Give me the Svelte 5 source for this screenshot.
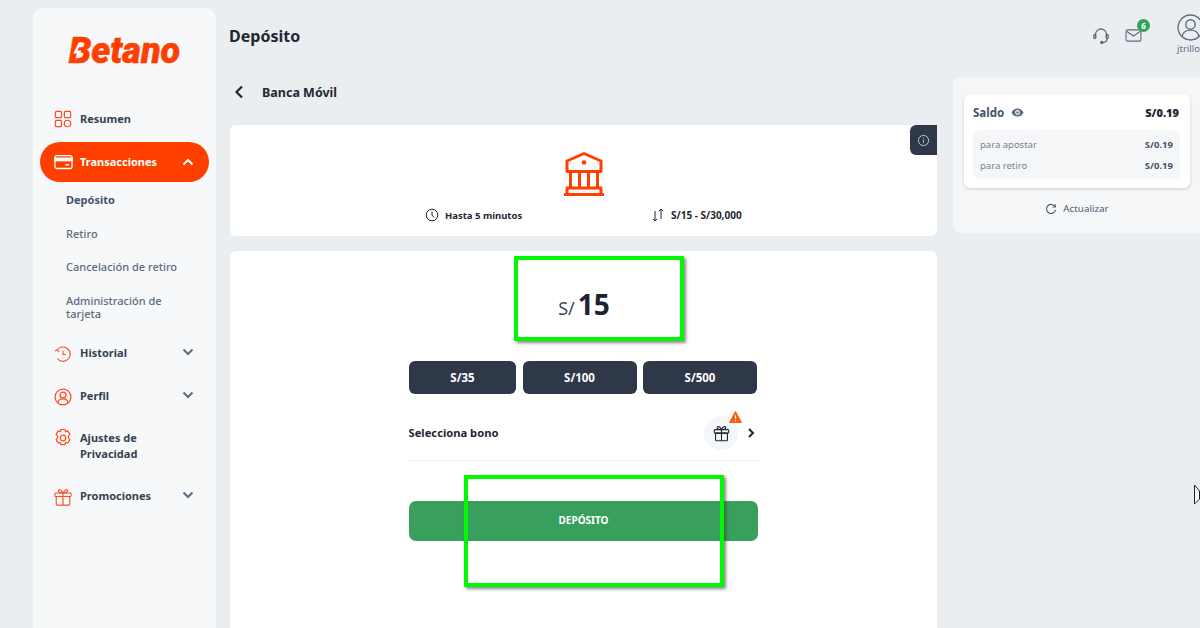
<script>
  const chips = ["S/35", "S/100", "S/500"];
  const subItems = ["Depósito", "Retiro", "Cancelación de retiro", "Administración de tarjeta"];
</script>

<div class="page">
  <aside class="sidebar">
    <div class="logo">
      <span class="wordmark">Betano
        <svg class="bolt" viewBox="0 0 14 24"><path d="M8 1 1.500 14H7L4 23l8-13H7l4-9z" fill="#f7f8fa" /></svg>
      </span>
    </div>
    <nav>
      <a class="item resumen">
        <svg class="ico" viewBox="0 0 20 20" fill="none" stroke="#fe4a1c" stroke-width="1.300">
          <rect x="1.500" y="1.500" width="7" height="7" rx="1.500" />
          <rect x="11.500" y="1.500" width="7" height="7" rx="1.500" />
          <rect x="1.500" y="11.500" width="7" height="7" rx="1.500" />
          <circle cx="15" cy="15" r="3.600" />
        </svg>
        <span>Resumen</span>
      </a>
      <a class="item active">
        <svg class="ico wide" viewBox="0 0 20 16" fill="none" stroke="#fff" stroke-width="1.400">
          <rect x="1" y="1.200" width="18" height="13.600" rx="2" />
          <rect x="1" y="4" width="18" height="2.600" fill="#fff" />
          <path d="M12 11h4" />
        </svg>
        <span>Transacciones</span>
        <svg class="chev up" viewBox="0 0 12 8" fill="none" stroke="#fff" stroke-width="2"><path d="M1.500 6.500 6 2l4.500 4.500" /></svg>
      </a>
      <ul class="sub">
        {#each subItems as label, i}
          <li class:current={i === 0}>{label}</li>
        {/each}
      </ul>
      <a class="item historial">
        <svg class="ico" viewBox="0 0 20 20" fill="none" stroke="#fe4a1c" stroke-width="1.200">
          <path d="M3.500 5.500A8 8 0 1 1 3.600 15" />
          <path d="M1 6.800 3.700 5.300 5.800 7.800M10 6.500v4h3" />
        </svg>
        <span>Historial</span>
        <svg class="chev" viewBox="0 0 12 8" fill="none" stroke="#5d6b80" stroke-width="2"><path d="M1.500 1.500 6 6l4.500-4.500" /></svg>
      </a>
      <a class="item perfil">
        <svg class="ico" viewBox="0 0 20 20" fill="none" stroke="#fe4a1c" stroke-width="1.400">
          <circle cx="10" cy="10" r="8.800" />
          <circle cx="10" cy="7.800" r="3.300" />
          <path d="M4.500 16.500c0-6 11-6 11 0" />
        </svg>
        <span>Perfil</span>
        <svg class="chev" viewBox="0 0 12 8" fill="none" stroke="#5d6b80" stroke-width="2"><path d="M1.500 1.500 6 6l4.500-4.500" /></svg>
      </a>
      <a class="item ajustes">
        <svg class="ico" viewBox="0 0 20 20" fill="none" stroke="#fe4a1c" stroke-width="1.200">
          <path d="M8 1.500h4l.6 2.300 2-.9 2.300 3.300-1.500 1.900.1 1.900 1.400 1.900-2.300 3.300-2-.9-.6 2.300H8l-.6-2.300-2 .9-2.300-3.300 1.400-1.900.1-1.900-1.500-1.900 2.300-3.300 2 .9z" stroke-linejoin="round" />
          <circle cx="10" cy="10" r="2.800" />
        </svg>
        <span>Ajustes de<br />Privacidad</span>
      </a>
      <a class="item promos">
        <svg class="ico" viewBox="0 0 20 20" fill="none" stroke="#fe4a1c" stroke-width="1.200">
          <rect x="1" y="5.500" width="18" height="4" rx="1" />
          <rect x="2.500" y="9.500" width="15" height="9.500" rx="1" />
          <path d="M10 5.500V19M10 5.500C8 1 4.500 1 5 3.500c.3 1.500 3 2 5 2zM10 5.500c2-4.500 5.500-4.500 5-2-.3 1.500-3 2-5 2z" />
        </svg>
        <span>Promociones</span>
        <svg class="chev" viewBox="0 0 12 8" fill="none" stroke="#5d6b80" stroke-width="2"><path d="M1.500 1.500 6 6l4.500-4.500" /></svg>
      </a>
    </nav>
  </aside>

  <main class="content">
    <h1>Depósito</h1>
    <div class="back">
      <svg viewBox="0 0 10 14" fill="none" stroke="#1f2733" stroke-width="2.200"><path d="M8 1.500 2.500 7 8 12.500" /></svg>
      <span>Banca Móvil</span>
    </div>

    <section class="card method">
      <div class="info-tab">
        <svg viewBox="0 0 14 14" fill="none" stroke="#c9ced6" stroke-width="1"><circle cx="7" cy="7" r="5.500" /><path d="M7 6.300v3.200M7 4.200v1" /></svg>
      </div>
      <svg class="bank" viewBox="0 0 42 44" fill="none" stroke="#fe3f00" stroke-width="3" stroke-linejoin="round">
        <path d="M21 1.500 38 9v10.500H4V9z" />
        <circle cx="21" cy="10.500" r="2.300" fill="#fe3f00" stroke="none" />
        <path d="M7.500 19.500V36M16.500 19.500V36M25.500 19.500V36M34.500 19.500V36" />
        <path d="M4 36h34v6.500H4zM1 42.500h40" />
      </svg>
      <div class="facts">
        <div class="fact">
          <svg viewBox="0 0 14 14" fill="none" stroke="#1f2733" stroke-width="1"><circle cx="7" cy="7" r="5.800" /><path d="M7 3.500V7l2 2.500" /></svg>
          <span>Hasta 5 minutos</span>
        </div>
        <div class="fact limits">
          <svg viewBox="0 0 14 14" fill="none" stroke="#1f2733" stroke-width="1"><path d="M4 3v10M1.800 10.800 4 13l2.200-2.200M10 11V1M7.800 3.200 10 1l2.200 2.200" /></svg>
          <span>S/15 - S/30,000</span>
        </div>
      </div>
    </section>

    <section class="card form">
      <div class="amount"><small>S/</small><strong>15</strong></div>
      <div class="chips">
        {#each chips as chip}
          <button>{chip}</button>
        {/each}
      </div>
      <div class="bonus">
        <span>Selecciona bono</span>
        <div class="gift">
          <svg viewBox="0 0 20 20" fill="none" stroke="#1f2733" stroke-width="1.300">
            <rect x="1.500" y="5.500" width="17" height="4" rx="1" />
            <rect x="3" y="9.500" width="14" height="9" rx="1" />
            <path d="M10 5.500v13M10 5.500C8 1 4.500 1 5 3.500c.3 1.500 3 2 5 2zM10 5.500c2-4.500 5.500-4.500 5-2-.3 1.500-3 2-5 2z" />
          </svg>
          <svg class="warn" viewBox="0 0 14 13">
            <path d="M7 .5 13.500 12.500H.5z" fill="#ff5a0a" stroke="#ff5a0a" stroke-linejoin="round" />
            <path d="M7 4.500v4M7 9.800v1.200" stroke="#fff" stroke-width="1.300" />
          </svg>
        </div>
        <svg class="next" viewBox="0 0 8 12" fill="none" stroke="#1f2733" stroke-width="2"><path d="M2 2l4 4-4 4" /></svg>
      </div>
      <button class="submit">DEPÓSITO</button>
    </section>
  </main>

  <aside class="balance">
    <div class="saldo">
      <div class="saldo-head">
        <span class="lbl">Saldo</span>
        <svg viewBox="0 0 14 10" fill="#5d6b80"><path d="M7 .5C3.800.5 1.300 2.400.3 5c1 2.600 3.500 4.500 6.700 4.500s5.700-1.900 6.700-4.500C12.700 2.400 10.200.5 7 .5zm0 7.200A2.700 2.700 0 1 1 7 2.300a2.700 2.700 0 0 1 0 5.400zM7 3.600a1.400 1.400 0 1 0 0 2.800 1.400 1.400 0 0 0 0-2.800z" /></svg>
        <b>S/0.19</b>
      </div>
      <div class="rows">
        <div><span>para apostar</span><b>S/0.19</b></div>
        <div><span>para retiro</span><b>S/0.19</b></div>
      </div>
    </div>
    <div class="refresh">
      <svg viewBox="0 0 14 14" fill="none" stroke="#4e5a6b" stroke-width="1.300"><path d="M11.800 4.500A5.300 5.300 0 1 0 12.300 8" /><path d="M12 1.500v3.200H8.800" /></svg>
      <span>Actualizar</span>
    </div>
  </aside>

  <div class="topbar">
    <svg class="hs" viewBox="0 0 18 18" fill="none" stroke="#5d6b80" stroke-width="1.300">
      <path d="M3.500 10V7.500a5.500 5.500 0 0 1 11 0V10" />
      <rect x="1.800" y="7.500" width="2" height="4" rx="1" />
      <rect x="14.200" y="7.500" width="2" height="4" rx="1" />
      <path d="M15 11.500c0 2.500-2 4-4.500 4" />
      <circle cx="9.800" cy="15.500" r="1" fill="#5d6b80" />
    </svg>
    <div class="mail">
      <svg viewBox="0 0 18 14" fill="none" stroke="#5d6b80" stroke-width="1.200">
        <rect x="1" y="1" width="16" height="12" rx="1.800" />
        <path d="M1.500 2.500 9 7.500l7.500-5" />
      </svg>
      <span class="badge">6</span>
    </div>
    <div class="user">
      <svg viewBox="0 0 26 26" fill="none" stroke="#5d6b80" stroke-width="1.300">
        <circle cx="13" cy="13" r="12" />
        <circle cx="13" cy="10" r="4.500" />
        <path d="M5 21.500c1-8 15-8 16 0" />
      </svg>
      <span>jtrillo</span>
    </div>
  </div>

  <!-- annotation rectangles + cursor sit over the page -->
  <div class="mark mark-amount"></div>
  <div class="mark mark-submit"></div>
  <svg class="cursor" viewBox="0 0 6 22" fill="#fff" stroke="#222" stroke-width="1"><path d="M.5 1 5.500 7v8L.5 20z" /></svg>
</div>

<style>
  :global(body) {
    margin: 0;
    background: #ebeef1;
  }
  .page {
    position: relative;
    width: 1200px;
    height: 628px;
    overflow: hidden;
    display: flex;
    align-items: flex-start;
    background: #ebeef1;
    font-family: "Noto Sans", "Open Sans", sans-serif;
    color: #1f2733;
  }
  .sidebar {
    box-sizing: border-box;
    width: 183px;
    height: 640px;
    margin: 8px 0 0 33px;
    background: #f7f8fa;
    border-radius: 10px;
    flex-shrink: 0;
    padding: 0 7px;
  }
  .logo {
    height: 101px;
    padding-top: 25px;
    box-sizing: border-box;
    text-align: center;
    font-family: "Roboto", sans-serif;
    font-style: italic;
    font-weight: 900;
    font-size: 36px;
    line-height: 36px;
    color: #fe3f00;
    -webkit-text-stroke: 0.5px #fe3f00;
  }
  .wordmark {
    position: relative;
    display: inline-block;
  }
  .bolt {
    position: absolute;
    left: 3px;
    top: 8px;
    width: 11px;
    height: 22px;
  }
  .item {
    display: flex;
    align-items: center;
    gap: 8px;
    font-size: 11px;
    font-weight: 700;
    color: #36424f;
    padding-left: 14px;
    padding-right: 15px;
    line-height: 16.500px;
  }
  .item .chev {
    margin-left: auto;
    width: 12px;
    height: 8px;
    margin-top: -3px;
  }
  .item .chev.up {
    margin-top: 0;
  }
  .ico {
    width: 18px;
    height: 18px;
    flex-shrink: 0;
  }
  .resumen {
    height: 20px;
  }
  .active {
    margin-top: 13px;
    height: 40px;
    background: #fe3f00;
    border-radius: 20px;
    color: #fff;
    padding-left: 14px;
    gap: 7px;
  }
  .active .ico {
    width: 19px;
    height: 16px;
  }
  .sub {
    list-style: none;
    margin: 0;
    padding: 0 20px 0 26px;
  }
  .sub li {
    font-size: 11px;
    line-height: 13.500px;
    font-weight: 500;
    color: #5d6b80;
    margin-top: 20px;
  }
  .sub li:first-child {
    margin-top: 11px;
  }
  .sub li.current {
    color: #43526b;
    font-weight: 700;
  }
  .historial {
    margin-top: 22px;
    height: 22px;
  }
  .perfil {
    margin-top: 21px;
    height: 22px;
  }
  .ajustes {
    margin-top: 22px;
    height: 34px;
    align-items: flex-start;
  }
  .ajustes .ico {
    width: 20px;
    height: 20px;
    margin-left: -1px;
    margin-right: -1px;
    margin-top: -2px;
  }
  .promos {
    margin-top: 22px;
    height: 22px;
  }

  .content {
    width: 707px;
    margin-left: 14px;
    flex-shrink: 0;
  }
  h1 {
    margin: 25px 0 0 -1px;
    font-size: 16px;
    line-height: 22px;
    font-weight: 700;
    color: #1f2733;
  }
  .back {
    display: flex;
    align-items: center;
    gap: 18px;
    margin-top: 35px;
    height: 20px;
    padding-left: 4px;
    font-size: 12.500px;
    font-weight: 700;
  }
  .back svg {
    width: 10px;
    height: 14px;
  }
  .card {
    background: #fff;
    border-radius: 6px;
    position: relative;
  }
  .method {
    margin-top: 23px;
    height: 111px;
    display: flex;
    flex-direction: column;
    align-items: center;
  }
  .info-tab {
    position: absolute;
    top: 0;
    right: 0;
    width: 27px;
    height: 30px;
    background: #2f3849;
    border-radius: 6px 0 0 6px;
    display: flex;
    align-items: center;
    justify-content: center;
  }
  .info-tab svg {
    width: 13px;
    height: 13px;
  }
  .bank {
    width: 42px;
    height: 44px;
    margin-top: 27px;
  }
  .facts {
    display: flex;
    align-self: flex-start;
    margin: 12px 0 0 195px;
    width: 400px;
    font-size: 9.500px;
    font-weight: 700;
  }
  .fact {
    display: flex;
    align-items: center;
    gap: 6px;
    width: 226px;
  }
  .fact svg {
    width: 14px;
    height: 14px;
  }
  .limits {
    width: auto;
    font-size: 10px;
  }
  .form {
    margin-top: 15px;
    height: 400px;
    padding: 0 179px;
  }
  .amount {
    height: 110px;
    display: flex;
    align-items: baseline;
    justify-content: center;
    gap: 3px;
    padding-top: 32px;
    box-sizing: border-box;
    margin-left: -1px;
    margin-right: 1px;
  }
  .amount small {
    font-size: 18px;
    color: #3f4a5a;
    margin-left: 3px;
  }
  .amount strong {
    font-size: 28px;
    line-height: 42px;
    font-weight: 700;
    color: #1b2230;
  }
  .chips {
    display: grid;
    grid-template-columns: 107px 114px 114px;
    column-gap: 6.500px;
    width: 349px;
  }
  .chips button {
    height: 33px;
    border: 0;
    border-radius: 6px;
    background: #2f3849;
    color: #fff;
    font: 700 11.500px "Noto Sans", sans-serif;
    padding: 0;
  }
  .bonus {
    display: flex;
    align-items: center;
    box-sizing: border-box;
    height: 61px;
    padding-top: 6px;
    margin-top: 6px;
    border-bottom: 1px solid #edeff2;
    font-size: 11.200px;
    font-weight: 700;
    width: 349px;
  }
  .bonus > span {
    margin: -2px 0 0 -0.500px;
  }
  .gift {
    position: relative;
    margin-left: auto;
    width: 34px;
    height: 34px;
    border-radius: 50%;
    background: #f5f6f8;
    display: flex;
    align-items: center;
    justify-content: center;
  }
  .gift > svg:first-child {
    width: 17px;
    height: 17px;
  }
  .warn {
    position: absolute;
    top: -5px;
    right: -4px;
    width: 13px;
    height: 12px;
  }
  .next {
    width: 8px;
    height: 12px;
    margin-left: 9px;
    margin-right: 3px;
  }
  .submit {
    display: block;
    margin-top: 40px;
    width: 349px;
    height: 40px;
    border: 0;
    border-radius: 7px;
    background: #38a05c;
    color: #fff;
    font: 700 10px "Noto Sans", sans-serif;
    padding: 0 0 2px;
  }

  .balance {
    box-sizing: border-box;
    width: 262px;
    height: 156px;
    margin: 77px 0 0 16px;
    flex-shrink: 0;
    background: #f5f6f8;
    border-radius: 8px;
    padding: 17px 0 0 11px;
  }
  .saldo {
    box-sizing: border-box;
    width: 226px;
    height: 94px;
    background: #fff;
    border-radius: 6px;
    box-shadow: 0 1px 3px rgba(40, 50, 70, 0.2);
    padding: 10px 10px 0 9px;
  }
  .saldo-head {
    display: flex;
    align-items: center;
    height: 17px;
    font-size: 11.500px;
    font-weight: 700;
  }
  .saldo-head .lbl {
    color: #43526b;
  }
  .saldo-head svg {
    width: 13px;
    height: 9px;
    margin-left: 7px;
  }
  .saldo-head b {
    margin-left: auto;
    color: #1f2733;
    margin-right: 1px;
    font-size: 11px;
  }
  .rows {
    margin-top: 9px;
    background: #f5f6f8;
    border-radius: 6px;
    padding: 4px 7px 0 7px;
    box-sizing: border-box;
    height: 49px;
  }
  .rows div {
    display: flex;
    justify-content: space-between;
    font-size: 9.500px;
    line-height: 21px;
    color: #778292;
  }
  .rows b {
    color: #43526b;
  }
  .refresh {
    display: flex;
    align-items: center;
    justify-content: center;
    gap: 6px;
    width: 226px;
    margin-top: 14px;
    font-size: 9.800px;
    color: #4e5a6b;
  }
  .refresh svg {
    width: 12px;
    height: 12px;
  }

  .topbar {
    position: absolute;
    top: 0;
    right: 0;
    width: 110px;
    height: 60px;
  }
  .hs {
    position: absolute;
    left: 2px;
    top: 27px;
    width: 18px;
    height: 18px;
  }
  .mail {
    position: absolute;
    left: 35px;
    top: 29px;
  }
  .mail svg {
    display: block;
    width: 17px;
    height: 13px;
  }
  .badge {
    position: absolute;
    top: -10px;
    left: 12px;
    width: 13px;
    height: 13px;
    border-radius: 50%;
    background: #35a25a;
    color: #fff;
    font-size: 8px;
    font-weight: 700;
    line-height: 13px;
    text-align: center;
  }
  .user {
    position: absolute;
    left: 87px;
    top: 14px;
    width: 40px;
    font-size: 9.500px;
    color: #5d6b80;
    white-space: nowrap;
  }
  .user svg {
    display: block;
    width: 27px;
    height: 27px;
  }
  .user span {
    display: block;
    margin-top: 2px;
    line-height: 12px;
  }

  .mark {
    position: absolute;
    box-sizing: border-box;
    border: 4px solid #00f800;
    box-shadow: 2px 2px 3px rgba(60, 60, 60, 0.6);
  }
  .mark-amount {
    left: 514px;
    top: 256px;
    width: 170px;
    height: 85px;
  }
  .mark-submit {
    left: 464px;
    top: 475px;
    width: 260px;
    height: 112px;
  }
  .cursor {
    position: absolute;
    left: 1194px;
    top: 484px;
    width: 6px;
    height: 22px;
  }
</style>
